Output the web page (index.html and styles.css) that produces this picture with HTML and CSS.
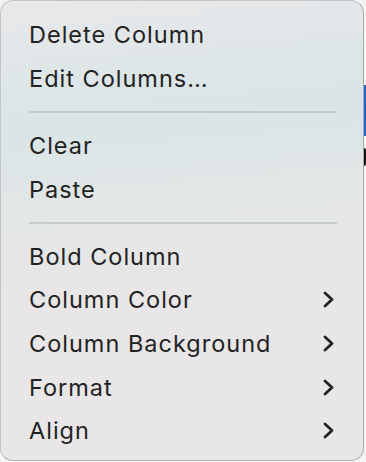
FILE: index.html
```html
<!DOCTYPE html>
<html lang="en">
<head>
  <meta charset="utf-8" />
  <title>Column menu</title>
  <link rel="stylesheet" href="styles.css">
</head>
<body>
  <div class="peek-blue"></div>
  <div class="peek-dark"></div>
  <div class="menu">
    <div class="item">Delete Column</div>
    <div class="item">Edit Columns…</div>
    <div class="sep"></div>
    <div class="item">Clear</div>
    <div class="item">Paste</div>
    <div class="sep"></div>
    <div class="item">Bold Column</div>
    <div class="item">Column Color
      <svg class="chev" viewBox="0 0 11 17"><path d="M2 2 L9 8.5 L2 15" /></svg>
    </div>
    <div class="item">Column Background
      <svg class="chev" viewBox="0 0 11 17"><path d="M2 2 L9 8.5 L2 15" /></svg>
    </div>
    <div class="item">Format
      <svg class="chev" viewBox="0 0 11 17"><path d="M2 2 L9 8.5 L2 15" /></svg>
    </div>
    <div class="item">Align
      <svg class="chev" viewBox="0 0 11 17"><path d="M2 2 L9 8.5 L2 15" /></svg>
    </div>
  </div>
</body>
</html>
```

FILE: styles.css
```css
body {
  margin: 0;
  background: #f4f4f4;
  font-family: Inter, "Liberation Sans", sans-serif;
  width: 366px;
  height: 462px;
  overflow: hidden;
  position: relative;
}
.peek-blue {
  position: absolute;
  left: 362px;
  top: 85px;
  width: 4px;
  height: 51px;
  background: #2463c9;
}
.peek-dark {
  position: absolute;
  left: 362px;
  top: 148px;
  width: 4px;
  height: 18px;
  background: #111;
  border-radius: 2px;
}
.menu {
  position: relative;
  box-sizing: border-box;
  width: 364px;
  height: 461px;
  padding: 12px 0 0;
  border: 1px solid #c4c4c4;
  border-right-color: #a9a9a9;
  border-bottom-color: #b0b0b0;
  border-radius: 13px;
  background: linear-gradient(175deg, #e9e8ea 0%, #dde6e8 18%, #d9e5e6 26%, #e2e6e7 42%, #e8e6e7 60%, #e8e6e7 100%);
  color: #232323;
}
.item {
  height: 43.7px;
  display: flex;
  align-items: center;
  justify-content: space-between;
  padding: 0 29px 0 28px;
  font-size: 23.5px;
  letter-spacing: 1px;
}
.chev {
  width: 11px;
  height: 17px;
  fill: none;
  stroke: #232323;
  stroke-width: 2.8;
  stroke-linecap: round;
  stroke-linejoin: round;
}
.sep {
  height: 2px;
  margin: 10.6px 26px 10.7px 28px;
  background: #c6cacb;
}
```
